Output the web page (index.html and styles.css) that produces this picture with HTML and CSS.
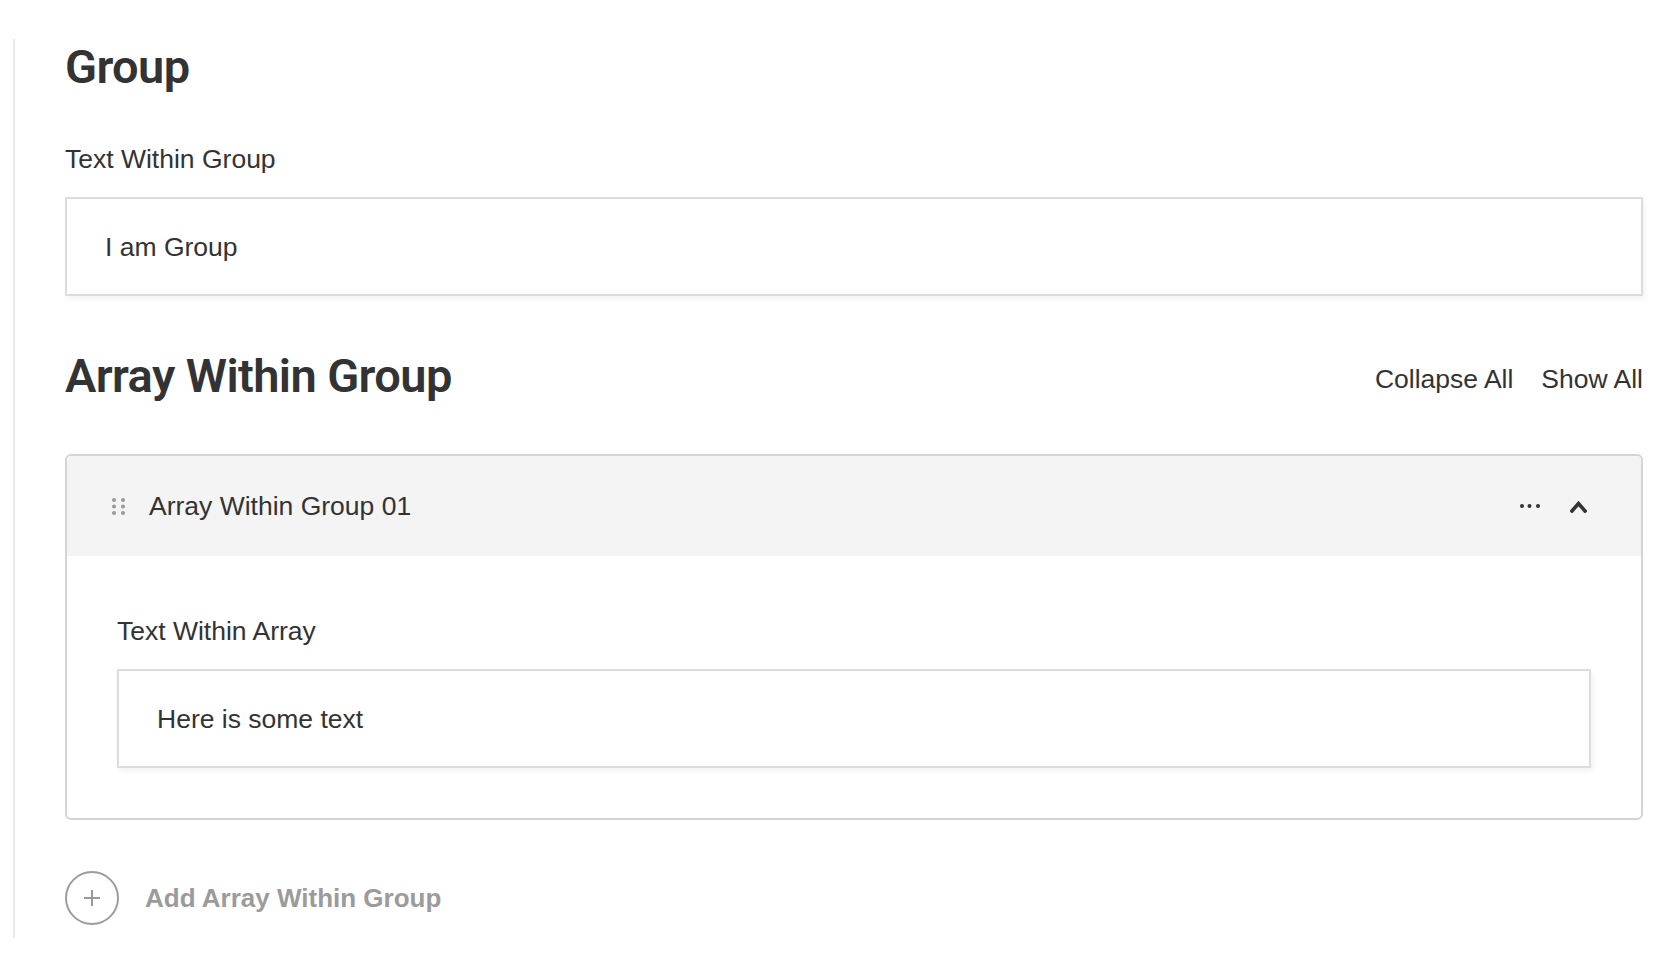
FILE: index.html
```html
<!DOCTYPE html>
<html lang="en">
<head>
<meta charset="utf-8">
<title>Group</title>
<link rel="stylesheet" href="styles.css">
</head>
<body>
<div class="frame">
  <h1 class="heading">Group</h1>
  <div class="field">
    <div class="label">Text Within Group</div>
    <div class="input">I am Group</div>
  </div>

  <div class="array-head">
    <h2 class="heading">Array Within Group</h2>
    <div class="array-actions">
      <span class="action">Collapse All</span>
      <span class="action">Show All</span>
    </div>
  </div>

  <div class="card">
    <div class="card-head">
      <svg class="drag" width="13" height="17" viewBox="0 0 13 17" aria-hidden="true">
        <circle cx="2" cy="2" r="2"/><circle cx="11" cy="2" r="2"/>
        <circle cx="2" cy="8.5" r="2"/><circle cx="11" cy="8.5" r="2"/>
        <circle cx="2" cy="15" r="2"/><circle cx="11" cy="15" r="2"/>
      </svg>
      <span class="card-title">Array Within Group 01</span>
      <div class="card-tools">
        <svg class="more" width="20" height="4" viewBox="0 0 20 4" aria-hidden="true">
          <circle cx="2" cy="2" r="2"/><circle cx="9.5" cy="2" r="2"/><circle cx="18" cy="2" r="2"/>
        </svg>
        <svg class="chevron" width="17" height="13" viewBox="0 0 17 13" aria-hidden="true">
          <path d="M2 11 L8.5 3.5 L15 11" fill="none" stroke="#333" stroke-width="3.6" stroke-linecap="square" stroke-linejoin="miter"/>
        </svg>
      </div>
    </div>
    <div class="card-body">
      <div class="label">Text Within Array</div>
      <div class="input">Here is some text</div>
    </div>
  </div>

  <div class="add-row">
    <span class="add-circle">
      <svg width="18" height="18" viewBox="0 0 18 18" aria-hidden="true">
        <path d="M9 1 V17 M1 9 H17" stroke="#999" stroke-width="2" fill="none"/>
      </svg>
    </span>
    <span class="add-text">Add Array Within Group</span>
  </div>
</div>
</body>
</html>
```
FILE: styles.css
```css
html, body {
  margin: 0;
  padding: 0;
  background: #ffffff;
}

body {
  font-family: "Liberation Sans", Arial, sans-serif;
  color: #333333;
}

.frame {
  margin: 39px 19px 0 13px;
  border-left: 2px solid #e9e9e9;
  padding: 4px 0 13px 50px;
  display: flex;
  flex-direction: column;
}

.heading {
  margin: 0;
  font-family: Roboto, "Liberation Sans", sans-serif;
  font-size: 47px;
  line-height: 47px;
  font-weight: 600;
  letter-spacing: -0.6px;
  color: #333333;
}

.field {
  margin-top: 56px;
  display: flex;
  flex-direction: column;
  gap: 25px;
}

.label {
  font-size: 26.5px;
  line-height: 26px;
  color: #333333;
}

.input {
  box-sizing: border-box;
  height: 99px;
  border: 2px solid #dcdcdc;
  padding: 0 38px;
  display: flex;
  align-items: center;
  font-size: 26.5px;
  line-height: 26px;
  color: #333333;
  background: #ffffff;
  box-shadow: 2px 3px 6px rgba(0, 0, 0, 0.05);
}

.array-head {
  margin-top: 56px;
  display: flex;
  justify-content: space-between;
  align-items: flex-start;
}

.array-actions {
  margin-top: 14px;
  display: flex;
  gap: 28px;
}

.action {
  font-size: 26.5px;
  line-height: 26px;
  color: #333333;
}

.card {
  margin-top: 55px;
  border: 2px solid #d4d4d4;
  border-radius: 6px;
  overflow: hidden;
  background: #ffffff;
}

.card-head {
  height: 100px;
  background: #f4f4f4;
  display: flex;
  align-items: center;
  padding: 0 54px 0 45px;
}

.drag {
  fill: #999999;
  flex: none;
}

.card-title {
  margin-left: 24px;
  font-size: 26.5px;
  line-height: 26px;
  color: #333333;
}

.card-tools {
  margin-left: auto;
  display: flex;
  align-items: center;
  gap: 30px;
}

.more {
  fill: #333333;
}

.card-body {
  padding: 62px 50px 50px 50px;
  display: flex;
  flex-direction: column;
  gap: 25px;
}

.add-row {
  margin-top: 51px;
  display: flex;
  align-items: center;
  gap: 26px;
}

.add-circle {
  box-sizing: border-box;
  width: 54px;
  height: 54px;
  border: 2px solid #9c9c9c;
  border-radius: 50%;
  display: flex;
  align-items: center;
  justify-content: center;
}

.add-circle svg {
  display: block;
}

.add-text {
  font-size: 26px;
  line-height: 26px;
  font-weight: 700;
  color: #9b9b9b;
}
```
